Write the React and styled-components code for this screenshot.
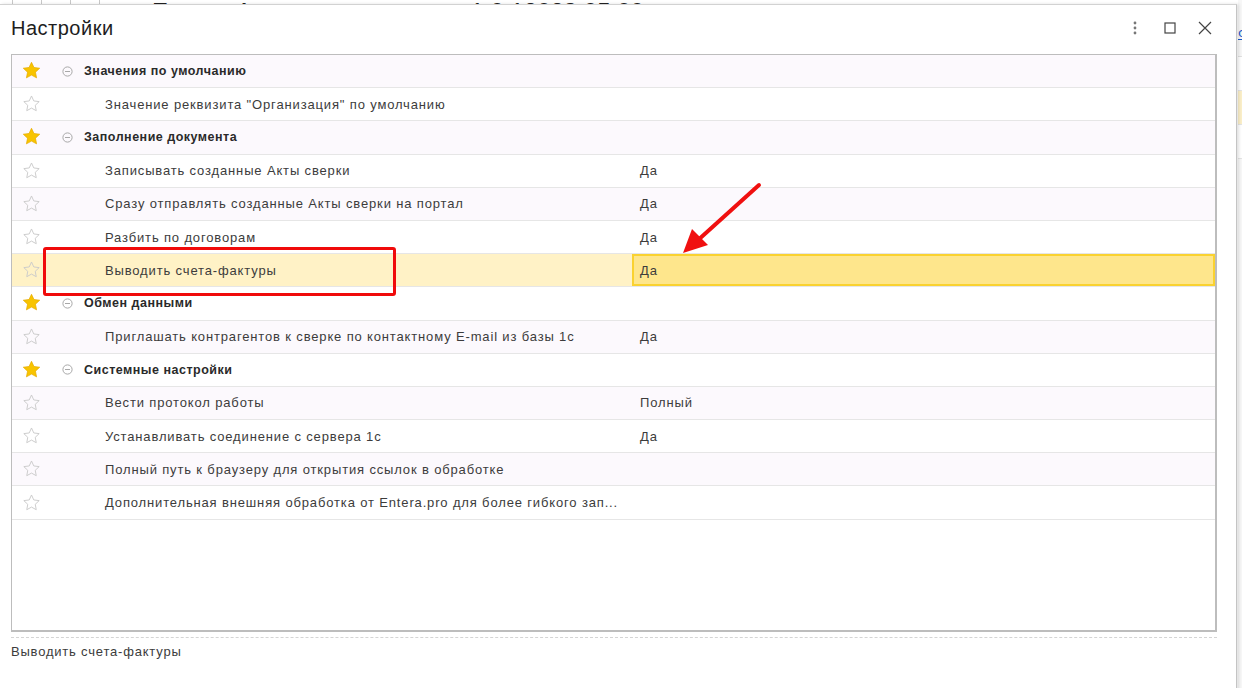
import styled, { createGlobalStyle } from "styled-components";

const GlobalStyle = createGlobalStyle`
  html, body {
    margin: 0;
    padding: 0;
    width: 1242px;
    height: 688px;
    overflow: hidden;
    background: #fff;
    font-family: "Liberation Sans", Arial, sans-serif;
  }
`;

const rows = [
  { group: true, name: "Значения по умолчанию" },
  { name: 'Значение реквизита "Организация" по умолчанию' },
  { group: true, name: "Заполнение документа" },
  { name: "Записывать созданные Акты сверки", value: "Да" },
  { name: "Сразу отправлять созданные Акты сверки на портал", value: "Да" },
  { name: "Разбить по договорам", value: "Да" },
  { name: "Выводить счета-фактуры", value: "Да", selected: true },
  { group: true, name: "Обмен данными" },
  { name: "Приглашать контрагентов к сверке по контактному E-mail из базы 1с", value: "Да" },
  { group: true, name: "Системные настройки" },
  { name: "Вести протокол работы", value: "Полный" },
  { name: "Устанавливать соединение с сервера 1с", value: "Да" },
  { name: "Полный путь к браузеру для открытия ссылок в обработке" },
  { name: "Дополнительная внешняя обработка от Entera.pro для более гибкого зап..." },
];

const Star = ({ filled }) =>
  filled ? (
    <svg width="19" height="19" viewBox="0 0 24 24">
      <path
        d="M12 1.6l3.1 6.6 7.3.9-5.4 5 1.4 7.2L12 17.8l-6.4 3.5 1.4-7.2-5.4-5 7.3-.9z"
        fill="#f8c400"
        stroke="#e6ab00"
        strokeWidth="0.9"
        strokeLinejoin="round"
      />
    </svg>
  ) : (
    <svg width="19" height="19" viewBox="0 0 24 24">
      <path
        d="M12 2.5l2.9 6.3 6.8.8-5 4.7 1.3 6.8L12 17.8l-6 3.3 1.3-6.8-5-4.7 6.8-.8z"
        fill="none"
        stroke="#cacaca"
        strokeWidth="1.2"
        strokeLinejoin="round"
      />
    </svg>
  );

const Collapse = () => (
  <svg width="11" height="11" viewBox="0 0 11 11">
    <circle cx="5.5" cy="5.5" r="4.6" fill="none" stroke="#a8a8a8" strokeWidth="1" />
    <line x1="3" y1="5.5" x2="8" y2="5.5" stroke="#a8a8a8" strokeWidth="1" />
  </svg>
);

const App = () => {
  return (
    <>
      <GlobalStyle />
      <Desktop>
        <BackTitle>
          <BackNav>
            <NavCell />
            <NavCell />
            <NavCell />
          </BackNav>
          <BackText>Entera. Акты сверки. версия 1.0.12023.05.00</BackText>
        </BackTitle>
        <BackSide>
          <SideLink>Ф</SideLink>
          <SideRow />
          <SideRow $hl />
          <SideRow />
        </BackSide>

        <Dialog>
          <Header>
            <Title>Настройки</Title>
            <HeaderTools>
              <ToolButton>
                <svg width="4" height="14" viewBox="0 0 4 14">
                  <circle cx="2" cy="2" r="1.4" fill="#777" />
                  <circle cx="2" cy="7" r="1.4" fill="#777" />
                  <circle cx="2" cy="12" r="1.4" fill="#777" />
                </svg>
              </ToolButton>
              <ToolButton>
                <svg width="12" height="12" viewBox="0 0 12 12">
                  <rect x="1" y="1" width="10" height="10" fill="none" stroke="#444" strokeWidth="1.2" />
                </svg>
              </ToolButton>
              <ToolButton>
                <svg width="14" height="14" viewBox="0 0 14 14">
                  <path d="M1 1L13 13M13 1L1 13" stroke="#444" strokeWidth="1.2" />
                </svg>
              </ToolButton>
            </HeaderTools>
          </Header>

          <Table>
            {rows.map((r, i) => (
              <Row key={i} $odd={i % 2 === 0} $selected={r.selected}>
                <StarCell>
                  <Star filled={r.group} />
                </StarCell>
                {r.group ? (
                  <GroupCell>
                    <Collapse />
                    <GroupName>{r.name}</GroupName>
                  </GroupCell>
                ) : (
                  <NameCell>{r.name}</NameCell>
                )}
                <ValueCell $selected={r.selected}>{r.value}</ValueCell>
              </Row>
            ))}
          </Table>

          <Divider />
          <Footer>Выводить счета-фактуры</Footer>

          <Highlight />
          <Arrow width="90" height="80" viewBox="0 0 90 80">
            <line x1="80" y1="6" x2="18" y2="62" stroke="#f01010" strokeWidth="4" strokeLinecap="round" />
            <polygon points="4,74 13,50 29,66" fill="#f01010" />
          </Arrow>
        </Dialog>
      </Desktop>
    </>
  );
};

export default App;

const Desktop = styled.div`
  position: relative;
  width: 1242px;
  height: 688px;
  background: #fff;
  overflow: hidden;
`;

const BackTitle = styled.div`
  display: flex;
  align-items: flex-end;
  height: 5px;
  overflow: hidden;
  background: #fff;
`;

const BackNav = styled.div`
  display: flex;
  margin-left: 12px;
  height: 16px;
  align-self: flex-end;
  margin-bottom: -10px;
`;

const NavCell = styled.div`
  width: 28px;
  height: 16px;
  border: 1px solid #c8c8c8;
  border-left: none;
  &:first-child {
    border-left: 1px solid #c8c8c8;
  }
`;

const BackText = styled.div`
  margin-left: 52px;
  font-size: 24px;
  line-height: 24px;
  color: #222;
  margin-bottom: -19px;
  white-space: nowrap;
`;

const BackSide = styled.div`
  position: absolute;
  left: 1238px;
  top: 0;
  width: 10px;
  height: 688px;
  background: #f7f7f7;
  display: flex;
  flex-direction: column;
  padding-top: 26px;
`;

const SideLink = styled.div`
  font-size: 13px;
  color: #1a5ac8;
  height: 30px;
  text-decoration: underline;
  border-bottom: 1px solid #e0e0e0;
`;

const SideRow = styled.div`
  height: 33px;
  border-bottom: 1px solid #e4e4e4;
  background: ${(p) => (p.$hl ? "#fbefc8" : "#fff")};
`;

const Dialog = styled.div`
  position: absolute;
  left: 0;
  top: 4px;
  width: 1237px;
  height: 700px;
  background: #fff;
  border-top: 1px solid #d2d2d2;
  border-right: 1px solid #c4c4c4;
  box-shadow: 2px 0 3px rgba(0, 0, 0, 0.12);
  display: flex;
  flex-direction: column;
  box-sizing: border-box;
`;

const Header = styled.div`
  height: 49px;
  display: flex;
  align-items: center;
  justify-content: space-between;
  padding: 0 0 0 11px;
  box-sizing: border-box;
`;

const Title = styled.div`
  font-size: 20px;
  letter-spacing: 0.5px;
  color: #1e1e1e;
  margin-top: -3px;
`;

const HeaderTools = styled.div`
  display: flex;
  align-items: center;
  margin-right: 14px;
  margin-top: -3px;
`;

const ToolButton = styled.div`
  width: 35px;
  height: 20px;
  display: flex;
  align-items: center;
  justify-content: center;
`;

const Table = styled.div`
  margin-left: 11px;
  width: 1206px;
  height: 578px;
  border: 1px solid #bdbdbd;
  border-right-width: 2px;
  border-bottom-width: 2px;
  box-sizing: border-box;
  display: flex;
  flex-direction: column;
`;

const Row = styled.div`
  display: grid;
  grid-template-columns: 38px 582px 1fr;
  height: 33.2px;
  box-sizing: border-box;
  border-bottom: 1px solid #e6e6e6;
  background: ${(p) => (p.$selected ? "#fff2c6" : p.$odd ? "#fcf9fd" : "#fff")};
  font-size: 13px;
  letter-spacing: 0.85px;
  color: #3c3c3c;
`;

const StarCell = styled.div`
  display: flex;
  align-items: center;
  justify-content: center;
  padding-bottom: 1px;
`;

const GroupCell = styled.div`
  display: flex;
  align-items: center;
  padding-left: 12px;
  gap: 11px;
`;

const GroupName = styled.span`
  font-weight: bold;
  font-size: 12.5px;
  letter-spacing: 0.5px;
  color: #2a2a2a;
`;

const NameCell = styled.div`
  display: flex;
  align-items: center;
  padding-left: 55px;
  white-space: nowrap;
`;

const ValueCell = styled.div`
  display: flex;
  align-items: center;
  padding-left: ${(p) => (p.$selected ? "6px" : "8px")};
  box-sizing: border-box;
  ${(p) =>
    p.$selected &&
    `
    background: #fee68c;
    border: 2px solid #fad230;
  `}
`;

const Divider = styled.div`
  margin: 5px 0 0 11px;
  width: 1206px;
  border-top: 1px dashed #d4d4d4;
`;

const Footer = styled.div`
  margin: 6px 0 0 11px;
  font-size: 13px;
  letter-spacing: 0.8px;
  color: #3c3c3c;
`;

const Highlight = styled.div`
  position: absolute;
  left: 43px;
  top: 242px;
  width: 353px;
  height: 49px;
  border: 3.5px solid #f00a0a;
  border-radius: 3px;
  box-sizing: border-box;
`;

const Arrow = styled.svg`
  position: absolute;
  left: 679px;
  top: 174px;
`;
